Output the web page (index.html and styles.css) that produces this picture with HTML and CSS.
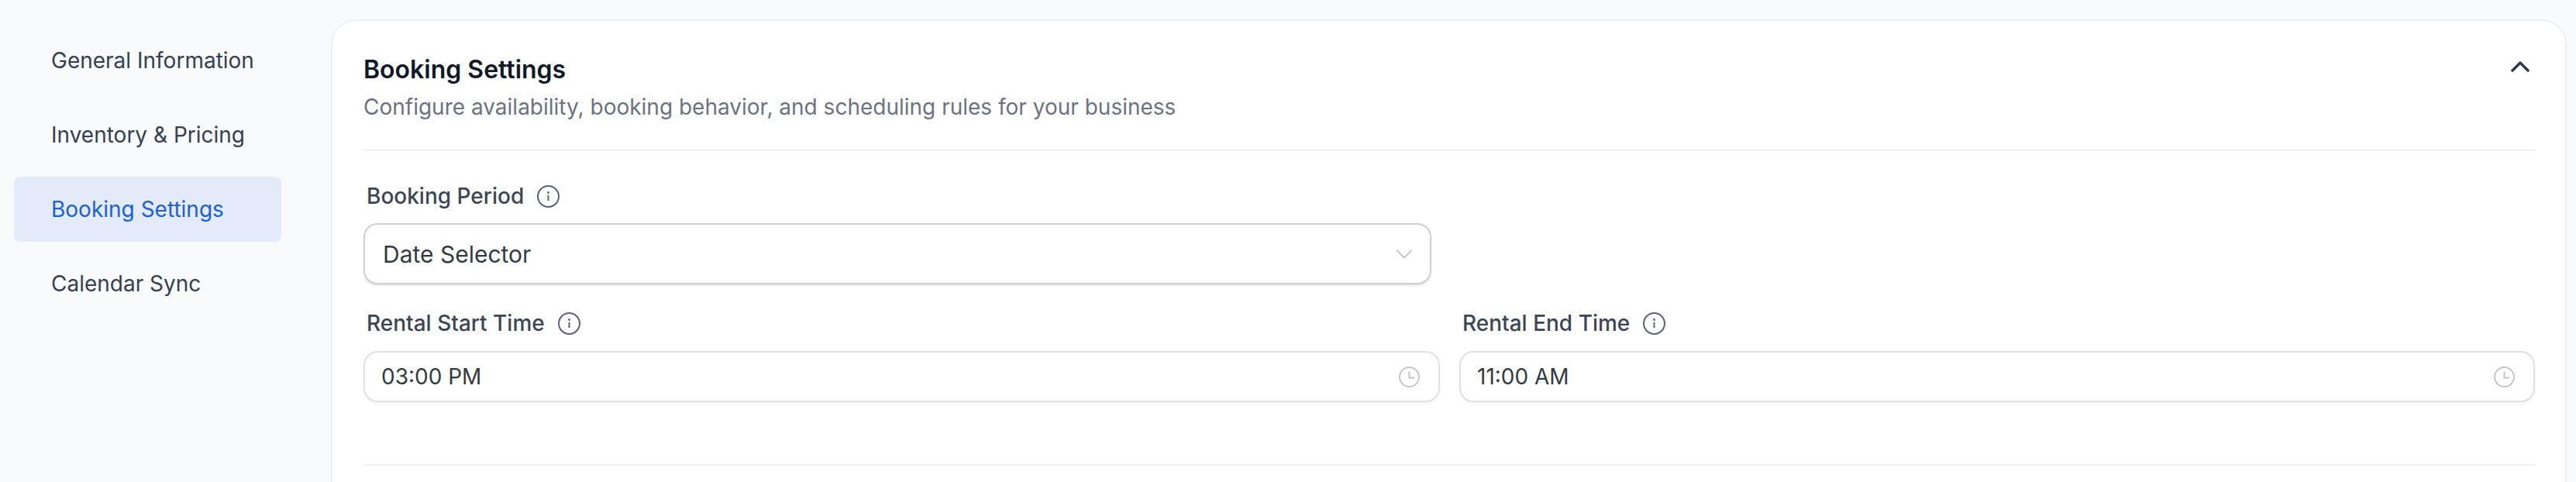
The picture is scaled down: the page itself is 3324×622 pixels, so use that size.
FILE: index.html
```html
<!DOCTYPE html>
<html>
<head>
<title>Booking Settings</title>
<meta charset="UTF-8">
<link rel="stylesheet" href="styles.css">
</head>
<body>
<div class="page">
  <nav class="side-nav">
    <a class="side-item">General Information</a>
    <a class="side-item">Inventory &amp; Pricing</a>
    <a class="side-item side-item-active">Booking Settings</a>
    <a class="side-item">Calendar Sync</a>
  </nav>
  <main class="card">
    <div class="card-head">
      <div>
        <div class="card-title">Booking Settings</div>
        <div class="card-subtitle">Configure availability, booking behavior, and scheduling rules for your business</div>
      </div>
      <svg class="icon-collapse" viewBox="0 0 24 14" fill="none" stroke="#33364f" stroke-width="3.5" stroke-linecap="round" stroke-linejoin="round"><path d="M2 12 12 2l10 10"/></svg>
    </div>

    <div class="field-label first-label">
      <span>Booking Period</span>
      <svg class="icon-info" viewBox="0 0 29 29" fill="none" stroke="#5b6178" stroke-width="2"><circle cx="14.5" cy="14.5" r="13.5"/><path d="M14.5 13v7"/><circle cx="14.5" cy="9.5" r="1.4" fill="#5b6178" stroke="none"/></svg>
    </div>
    <div class="select-box">
      <span>Date Selector</span>
      <svg class="icon-chevron" viewBox="0 0 20 12" fill="none" stroke="#c6c6c8" stroke-width="2"><path d="M.5 1l9.5 9.5L19.5 1"/></svg>
    </div>

    <div class="time-row">
      <div>
        <div class="field-label">
          <span>Rental Start Time</span>
          <svg class="icon-info" viewBox="0 0 29 29" fill="none" stroke="#5b6178" stroke-width="2"><circle cx="14.5" cy="14.5" r="13.5"/><path d="M14.5 13v7"/><circle cx="14.5" cy="9.5" r="1.4" fill="#5b6178" stroke="none"/></svg>
        </div>
        <div class="time-box">
          <span>03:00 PM</span>
          <svg class="icon-clock" viewBox="0 0 27 27" fill="none" stroke="#c6c6c8" stroke-width="2"><circle cx="13.5" cy="13.5" r="12.5"/><path d="M13.5 6.5v8h6.5"/></svg>
        </div>
      </div>
      <div>
        <div class="field-label">
          <span>Rental End Time</span>
          <svg class="icon-info" viewBox="0 0 29 29" fill="none" stroke="#5b6178" stroke-width="2"><circle cx="14.5" cy="14.5" r="13.5"/><path d="M14.5 13v7"/><circle cx="14.5" cy="9.5" r="1.4" fill="#5b6178" stroke="none"/></svg>
        </div>
        <div class="time-box">
          <span>11:00 AM</span>
          <svg class="icon-clock" viewBox="0 0 27 27" fill="none" stroke="#c6c6c8" stroke-width="2"><circle cx="13.5" cy="13.5" r="12.5"/><path d="M13.5 6.5v8h6.5"/></svg>
        </div>
      </div>
    </div>

    <div class="divider"></div>
  </main>
</div>
</body>
</html>
```

FILE: styles.css
```css
html, body {
 margin: 0;
 height: 622px;
 overflow: hidden;
 background-color: #f9fafc;
 font-family: Inter, "Liberation Sans", sans-serif;
}
.page {
 display: flex;
 align-items: flex-start;
 height: 622px;
 overflow: hidden;
}
.side-nav {
 display: flex;
 flex-direction: column;
 flex: none;
 gap: 12px;
 width: 345px;
 margin-left: 18px;
 margin-top: 36px;
}
.side-item {
 height: 84px;
 line-height: 84px;
 padding-left: 48px;
 border-radius: 8px;
 font-size: 28px;
 color: #343f52;
}
.side-item-active {
 background-color: #e3eafa;
 color: #1d5fd6;
}
.card {
 flex: 1;
 box-sizing: border-box;
 height: 800px;
 margin-left: 64px;
 margin-right: 12px;
 margin-top: 25px;
 padding: 41px 38px 0 40px;
 background-color: #ffffff;
 border: 2px solid #eff0f4;
 border-radius: 32px;
}
.card-head {
 display: flex;
 justify-content: space-between;
 align-items: flex-start;
 padding-bottom: 35px;
 border-bottom: 2px solid #eff0f2;
}
.card-title {
 font-size: 32px;
 font-weight: 600;
 line-height: 44px;
 color: #111827;
}
.card-subtitle {
 margin-top: 6px;
 font-size: 28px;
 line-height: 40px;
 color: #6b7280;
}
.icon-collapse {
 width: 24px;
 height: 14px;
 margin-top: 11px;
 margin-right: 8px;
}
.field-label {
 display: flex;
 align-items: center;
 gap: 17px;
 height: 40px;
 padding-left: 4px;
 font-size: 28px;
 font-weight: 500;
 color: #3b4556;
}
.first-label {
 margin-top: 38px;
}
.icon-info {
 width: 29px;
 height: 29px;
 flex: none;
}
.select-box, .time-box {
 display: flex;
 justify-content: space-between;
 align-items: center;
 box-sizing: border-box;
 background-color: #ffffff;
 border-radius: 18px;
 color: #333a42;
}
.select-box {
 width: 1378px;
 height: 79px;
 margin-top: 15px;
 padding: 0 22px 0 23px;
 border: 2px solid #cfd0d2;
 box-shadow: 0 2px 3px rgba(0,0,0,0.1);
 font-size: 30px;
}
.icon-chevron {
 width: 22px;
 height: 12px;
}
.time-row {
 display: grid;
 grid-template-columns: 1389px 1388px;
 gap: 25px;
 margin-top: 30px;
}
.time-box {
 height: 66px;
 margin-top: 16px;
 padding: 0 24px 0 21px;
 border: 2px solid #e1e1e3;
 box-shadow: 0 2px 4px rgba(0,0,0,0.05);
 font-size: 28px;
}
.icon-clock {
 width: 27px;
 height: 27px;
}
.divider {
 margin-top: 80px;
 border-top: 2px solid #eff0f2;
}
```
